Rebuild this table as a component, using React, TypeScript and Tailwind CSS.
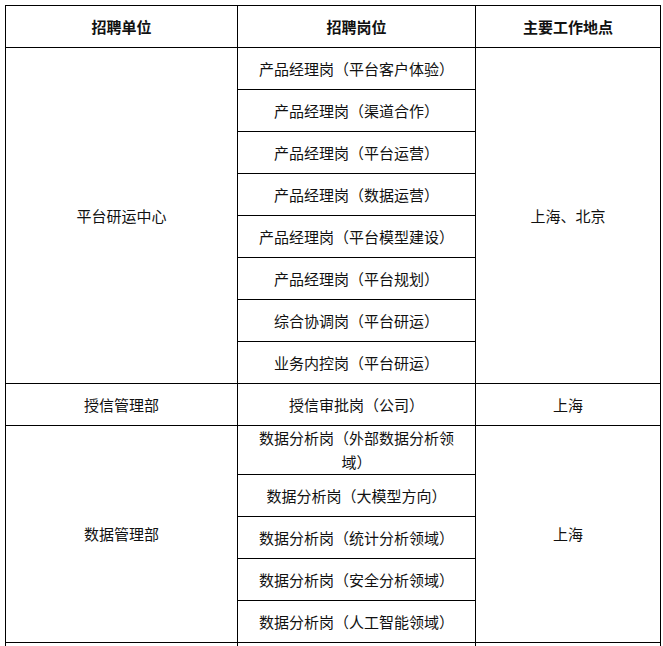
import React from 'react';

interface Group {
    unit: string;
    place: string;
    posts: { title: string; tall?: boolean }[];
}

const groups: Group[] = [
    {
        unit: '平台研运中心',
        place: '上海、北京',
        posts: [
            { title: '产品经理岗（平台客户体验）' },
            { title: '产品经理岗（渠道合作）' },
            { title: '产品经理岗（平台运营）' },
            { title: '产品经理岗（数据运营）' },
            { title: '产品经理岗（平台模型建设）' },
            { title: '产品经理岗（平台规划）' },
            { title: '综合协调岗（平台研运）' },
            { title: '业务内控岗（平台研运）' }
        ]
    },
    {
        unit: '授信管理部',
        place: '上海',
        posts: [{ title: '授信审批岗（公司）' }]
    },
    {
        unit: '数据管理部',
        place: '上海',
        posts: [
            { title: '数据分析岗（外部数据分析领域）', tall: true },
            { title: '数据分析岗（大模型方向）' },
            { title: '数据分析岗（统计分析领域）' },
            { title: '数据分析岗（安全分析领域）' },
            { title: '数据分析岗（人工智能领域）' }
        ]
    }
];

const cell = 'border border-black px-[12px] py-0 text-center align-middle';

export default function App() {
    return (
        <div
            className="h-[646px] overflow-hidden bg-white pl-[5px] pt-[5px] text-[15px] leading-[24px] text-[#111]"
            style={{ fontFamily: '"Microsoft YaHei", "Noto Sans CJK SC", sans-serif' }}
        >
            <table className="w-[655px] table-fixed border-collapse">
                <colgroup>
                    <col className="w-[232px]" />
                    <col className="w-[238px]" />
                    <col className="w-[185px]" />
                </colgroup>
                <thead>
                    <tr className="h-[42px] font-bold">
                        <th className={cell}>招聘单位</th>
                        <th className={cell}>招聘岗位</th>
                        <th className={cell}>主要工作地点</th>
                    </tr>
                </thead>
                <tbody>
                    {groups.map((group) =>
                        group.posts.map((post, i) => (
                            <tr
                                key={group.unit + i}
                                className={post.tall ? 'h-[48px]' : 'h-[42px]'}
                            >
                                {i === 0 && (
                                    <td className={cell} rowSpan={group.posts.length}>
                                        {group.unit}
                                    </td>
                                )}
                                <td className={cell}>{post.title}</td>
                                {i === 0 && (
                                    <td className={cell} rowSpan={group.posts.length}>
                                        {group.place}
                                    </td>
                                )}
                            </tr>
                        ))
                    )}
                    {/* next row, cut off by the bottom edge */}
                    <tr className="h-[42px]">
                        <td className={cell}></td>
                        <td className={cell}></td>
                        <td className={cell}></td>
                    </tr>
                </tbody>
            </table>
        </div>
    );
}
